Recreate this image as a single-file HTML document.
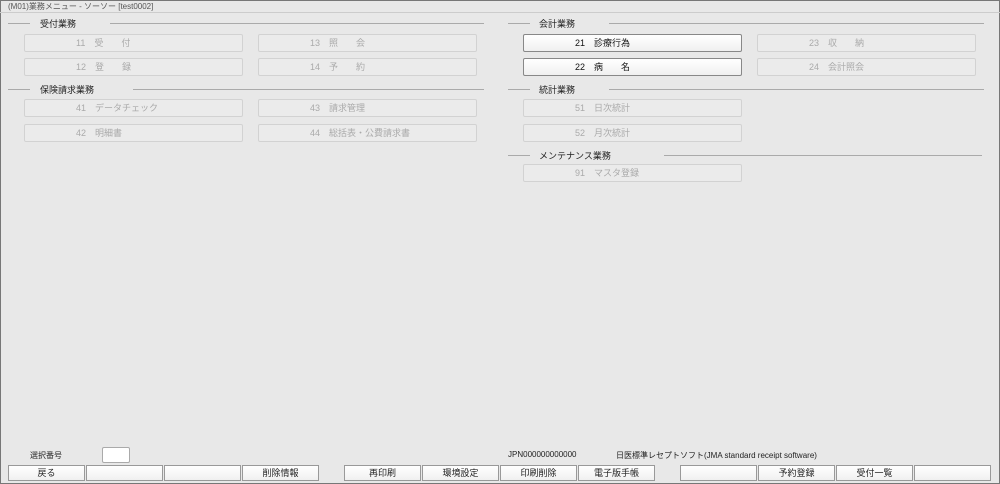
<!DOCTYPE html>
<html><head><meta charset="utf-8"><style>
*{margin:0;padding:0;box-sizing:border-box}
body{width:1000px;height:484px;background:#e8e8e8;font-family:"Liberation Sans","Noto Sans CJK JP",sans-serif;font-size:9px;color:#222;position:relative;overflow:hidden}
.fr{position:absolute;left:0;top:0;width:1000px;height:484px;border:1px solid #777}
.t{position:absolute;left:8px;top:1px;font-size:8px;color:#555}
.top{position:absolute;left:0;top:12px;width:1000px;height:1px;background:#ccc}
.sec{position:absolute;height:1px;background:#aaa}
.lbl{position:absolute;font-size:9px;color:#222;white-space:nowrap}
.b{position:absolute;width:219px;height:18px;border:1px solid #d2d2d2;border-radius:2px;background:#ebebeb;color:#aaa;font-size:9px;line-height:16px;text-align:left;padding-left:51px;white-space:pre}
.b.on{background:linear-gradient(#fff,#f0f0f0);border:1px solid #888;color:#111}
.f{position:absolute;top:465px;height:16px;width:77px;border:1px solid #999;background:linear-gradient(#fff,#f0f0f0);font-size:9px;line-height:14px;text-align:center;color:#222}
</style></head><body>
<div class="fr"></div>
<div class="t">(M01)業務メニュー - ソーソー [test0002]</div>
<div class="top"></div>

<div class="sec" style="left:8px;top:23px;width:22px"></div><div class="lbl" style="left:40px;top:17px">受付業務</div><div class="sec" style="left:110px;top:23px;width:374px"></div>
<div class="b" style="left:24px;top:34px">11　受　　付</div>
<div class="b" style="left:258px;top:34px">13　照　　会</div>
<div class="b" style="left:24px;top:58px">12　登　　録</div>
<div class="b" style="left:258px;top:58px">14　予　　約</div>
<div class="sec" style="left:8px;top:89px;width:22px"></div><div class="lbl" style="left:40px;top:83px">保険請求業務</div><div class="sec" style="left:133px;top:89px;width:351px"></div>
<div class="b" style="left:24px;top:99px">41　データチェック</div>
<div class="b" style="left:258px;top:99px">43　請求管理</div>
<div class="b" style="left:24px;top:124px">42　明細書</div>
<div class="b" style="left:258px;top:124px">44　総括表・公費請求書</div>

<div class="sec" style="left:508px;top:23px;width:22px"></div><div class="lbl" style="left:539px;top:17px">会計業務</div><div class="sec" style="left:609px;top:23px;width:375px"></div>
<div class="b on" style="left:523px;top:34px">21　診療行為</div>
<div class="b" style="left:757px;top:34px">23　収　　納</div>
<div class="b on" style="left:523px;top:58px">22　病　　名</div>
<div class="b" style="left:757px;top:58px">24　会計照会</div>
<div class="sec" style="left:508px;top:89px;width:22px"></div><div class="lbl" style="left:539px;top:83px">統計業務</div><div class="sec" style="left:609px;top:89px;width:375px"></div>
<div class="b" style="left:523px;top:99px">51　日次統計</div>
<div class="b" style="left:523px;top:124px">52　月次統計</div>
<div class="sec" style="left:508px;top:155px;width:22px"></div><div class="lbl" style="left:539px;top:149px">メンテナンス業務</div><div class="sec" style="left:664px;top:155px;width:318px"></div>
<div class="b" style="left:523px;top:164px">91　マスタ登録</div>

<div class="lbl" style="left:30px;top:450px;font-size:8px">選択番号</div>
<div style="position:absolute;left:102px;top:447px;width:28px;height:16px;background:#fff;border:1px solid #aaa;border-radius:2px"></div>
<div class="lbl" style="left:508px;top:450px;font-size:8px">JPN000000000000</div>
<div class="lbl" style="left:616px;top:450px;font-size:8px">日医標準レセプトソフト(JMA standard receipt software)</div>

<div class="f" style="left:8px">戻る</div>
<div class="f" style="left:86px"></div>
<div class="f" style="left:164px"></div>
<div class="f" style="left:242px">削除情報</div>
<div class="f" style="left:344px">再印刷</div>
<div class="f" style="left:422px">環境設定</div>
<div class="f" style="left:500px">印刷削除</div>
<div class="f" style="left:578px">電子版手帳</div>
<div class="f" style="left:680px"></div>
<div class="f" style="left:758px">予約登録</div>
<div class="f" style="left:836px">受付一覧</div>
<div class="f" style="left:914px"></div>
</body></html>
